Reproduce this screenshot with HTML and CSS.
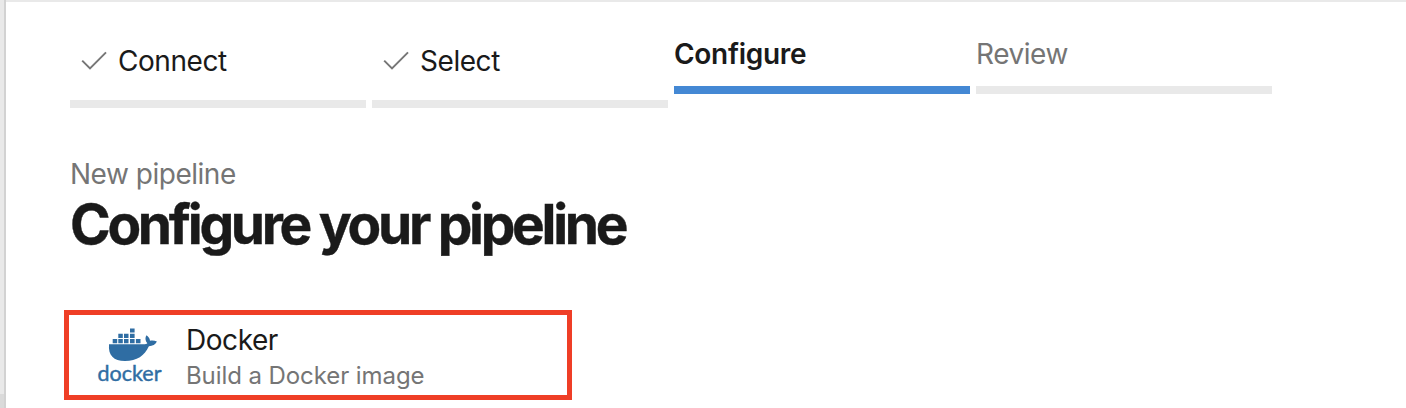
FILE: index.html
```html
<!DOCTYPE html>
<html lang="en">
<head>
<meta charset="utf-8">
<title>Configure your pipeline</title>
<link rel="stylesheet" href="styles.css">
</head>
<body>
<div class="app">
  <aside class="rail"></aside>
  <main class="content">
    <nav class="steps">
      <div class="step done">
        <svg class="check" viewBox="0 0 28 22"><path d="M2.200 10.600 10 18.400 26 2.400"/></svg>
        <span>Connect</span>
      </div>
      <div class="step done">
        <svg class="check" viewBox="0 0 28 22"><path d="M2.200 10.600 10 18.400 26 2.400"/></svg>
        <span>Select</span>
      </div>
      <div class="step current"><span>Configure</span></div>
      <div class="step upcoming"><span>Review</span></div>
    </nav>
    <p class="eyebrow">New pipeline</p>
    <h1 class="title">Configure your pipeline</h1>
    <section class="template">
      <svg class="logo" viewBox="0 0 66 60">
        <path d="M32 2.500h4.600v4.100H32zM20.300 7.800h4.500V12h-4.500zM26 7.800h4.500V12H26zM32 7.800h4.600V12H32zM14.700 13.100h4.500v4.200h-4.500zM20.300 13.100h4.500v4.200h-4.500zM26 13.100h4.500v4.200H26zM32 13.100h4.600v4.200H32zM37.900 13.100h4.600v4.200h-4.600z"/>
        <path d="M11 18.300h34.500c2 0 3.200-.3 3.800-1-2.300-3-2.300-5.800-.8-8.100 2.200 1.500 3.200 3 3.500 5.600 2.300-.5 4.800-.2 6.900.8-1.400 3.200-4.300 4.600-8 4.600C46.600 29.700 39 35 27 35 15.600 35 10.100 29.600 11 18.300z"/>
        <text class="wordmark" x="-.5" y="54.500" textLength="64" lengthAdjust="spacingAndGlyphs">docker</text>
      </svg>
      <div class="details">
        <div class="name">Docker</div>
        <div class="description">Build a Docker image</div>
      </div>
    </section>
  </main>
</div>
</body>
</html>
```
FILE: styles.css
```css
* { box-sizing: border-box; }
body { margin: 0; background: #fff; font-family: Inter, sans-serif; color: #1a1a1a; }
.app { display: flex; height: 408px; overflow: hidden; }
.rail { width: 6px; flex: none; border-right: 2px solid #d2d2d2; background: linear-gradient(#e9e9e9 394px, #dadada 394px); }
.content { flex: 1; border-top: 2px solid #e9e9e9; padding: 34px 0 0 64px; }
.steps { display: flex; align-items: flex-start; gap: 6px; height: 72px; }
.step { width: 296px; height: 58px; border-bottom: 8px solid #e9e9e9; font-size: 28px; line-height: 36px; white-space: nowrap; }
.step span { letter-spacing: -0.45px; }
.done { height: 72px; display: flex; align-items: center; padding: 0 0 14px 10px; }
.check { width: 28px; height: 22px; margin-right: 10px; fill: none; stroke: #767676; stroke-width: 2; }
.current { border-color: #4488d4; font-weight: 600; }
.step.current span { letter-spacing: -0.3px; }
.upcoming { color: #757575; }
.eyebrow { margin: 48px 0 0; font-size: 28px; line-height: 36px; letter-spacing: -0.48px; color: #757575; }
.title { margin: 0; font-size: 55px; line-height: 65px; font-weight: 700; letter-spacing: -3.3px; white-space: nowrap; -webkit-text-stroke: 0.4px #1a1a1a; }
.template { width: 508px; height: 90px; margin: 53px 0 0 -6px; border: 5px solid #ef3e26; display: flex; padding: 11px 0 0 29px; }
.logo { width: 66px; height: 60px; margin-right: 22px; fill: #2f6da3; overflow: visible; }
.wordmark { font: 400 20.5px Lato, sans-serif; stroke: #2f6da3; stroke-width: 0.4px; }
.name { font-size: 28px; line-height: 28px; letter-spacing: -0.45px; }
.description { font-size: 24px; line-height: 44px; letter-spacing: -0.08px; color: #757575; }
```
